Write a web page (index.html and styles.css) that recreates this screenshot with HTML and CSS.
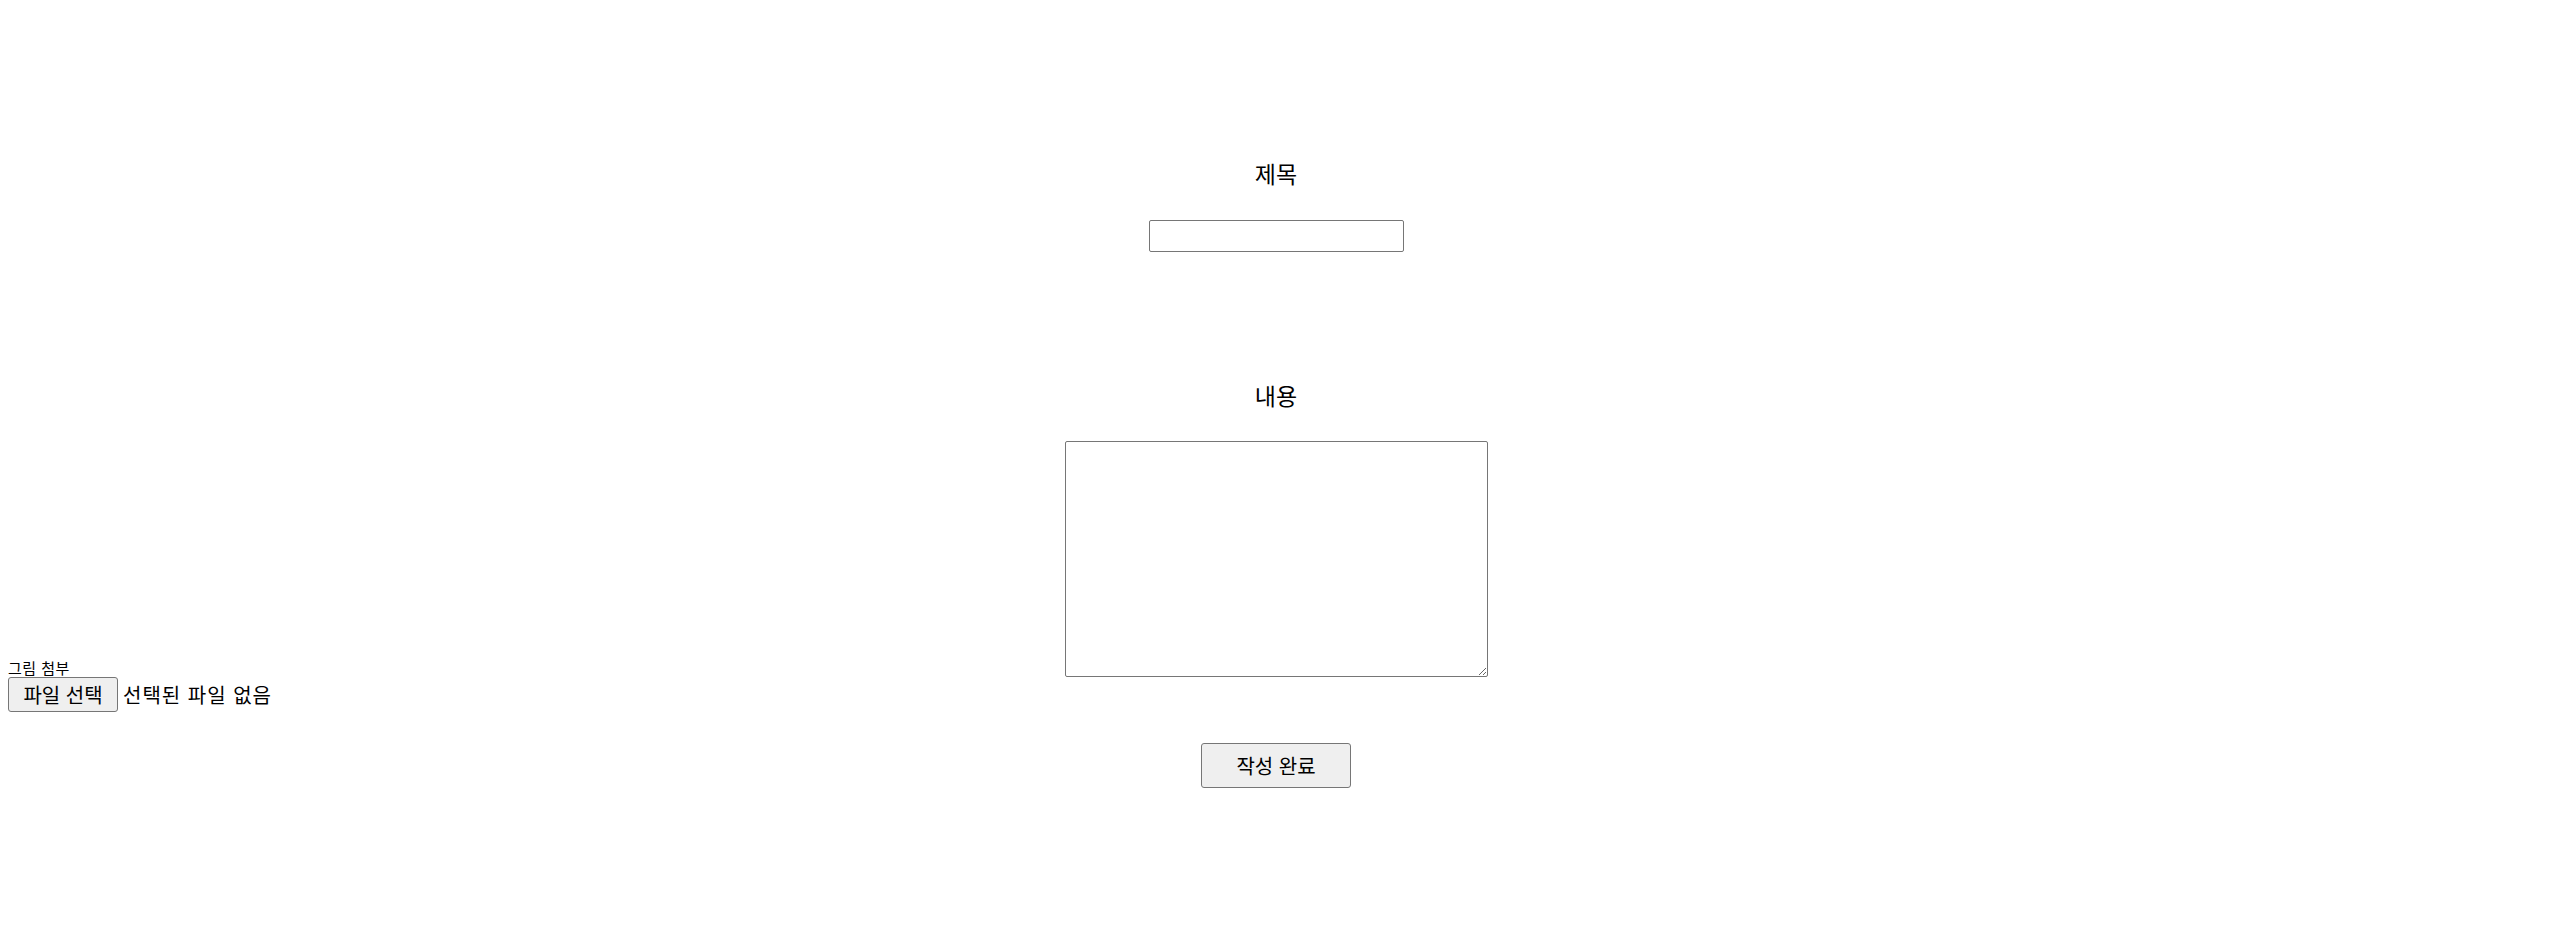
FILE: index.html
```html
<!DOCTYPE html>
<html lang="ko">
<head>
  <meta charset="utf-8">
  <link rel="stylesheet" href="styles.css">
  <title>글쓰기</title>
</head>
<body>
  <form class="write-form" action="#" method="POST">
    <div class="field">
      <h3 class="field-label">제목</h3>
      <input type="text" class="title-input" name="title">
    </div>

    <div class="field">
      <h3 class="field-label">내용</h3>
      <div class="content-row">
        <div class="side-left">
          <div class="attach">
            <label class="attach-label" for="image">그림 첨부</label>
            <div class="file-picker">
              <label class="file-button" for="image">파일 선택</label>
              <span class="file-name">선택된 파일 없음</span>
              <input type="file" id="image" name="image" class="file-hidden">
            </div>
          </div>
        </div>
        <textarea class="content-input" name="content"></textarea>
        <div></div>
      </div>
    </div>

    <div class="submit-row">
      <button type="submit" class="submit-button">작성 완료</button>
    </div>
  </form>
</body>
</html>
```

FILE: styles.css
```css
body {
  margin: 0;
  background-color: white;
  color: black;
  font-family: "Noto Sans CJK KR", "Noto Sans", sans-serif;
}

.write-form {
  padding-top: 158px;
  padding-right: 4px;
}

.field {
  display: flex;
  flex-direction: column;
  align-items: center;
}

.field + .field {
  margin-top: 128px;
}

.field-label {
  margin: 0 0 32px 0;
  font-size: 23px;
  font-weight: normal;
  line-height: 30px;
}

.field + .field .field-label {
  margin-bottom: 31px;
}

.title-input {
  width: 255px;
  height: 32px;
  box-sizing: border-box;
  border: 1px solid #767676;
  border-radius: 2px;
  padding: 1px 3px;
  font-size: 20px;
}

.content-row {
  display: grid;
  grid-template-columns: 1fr 423px 1fr;
  align-items: end;
  width: 100%;
}

.side-left {
  margin-bottom: -35px;
  padding-left: 8px;
}

.attach-label {
  display: block;
  font-size: 15px;
  line-height: 19px;
  letter-spacing: 0.5px;
}

.file-picker {
  display: flex;
  align-items: center;
}

.file-button {
  display: inline-flex;
  align-items: center;
  justify-content: center;
  width: 110px;
  height: 35px;
  box-sizing: border-box;
  background-color: #efefef;
  border: 1px solid #767676;
  border-radius: 3px;
  font-size: 20px;
  cursor: pointer;
}

.file-name {
  margin-left: 5px;
  font-size: 20px;
  letter-spacing: 1px;
}

.file-hidden {
  display: none;
}

.content-input {
  width: 423px;
  height: 236px;
  box-sizing: border-box;
  border: 1px solid #767676;
  border-radius: 2px;
  margin: 0;
  font-size: 20px;
  font-family: inherit;
}

.submit-row {
  display: flex;
  justify-content: center;
  margin-top: 66px;
}

.submit-button {
  width: 150px;
  height: 45px;
  background-color: #efefef;
  border: 1px solid #767676;
  border-radius: 3px;
  font-family: inherit;
  font-size: 20px;
  cursor: pointer;
}
```
